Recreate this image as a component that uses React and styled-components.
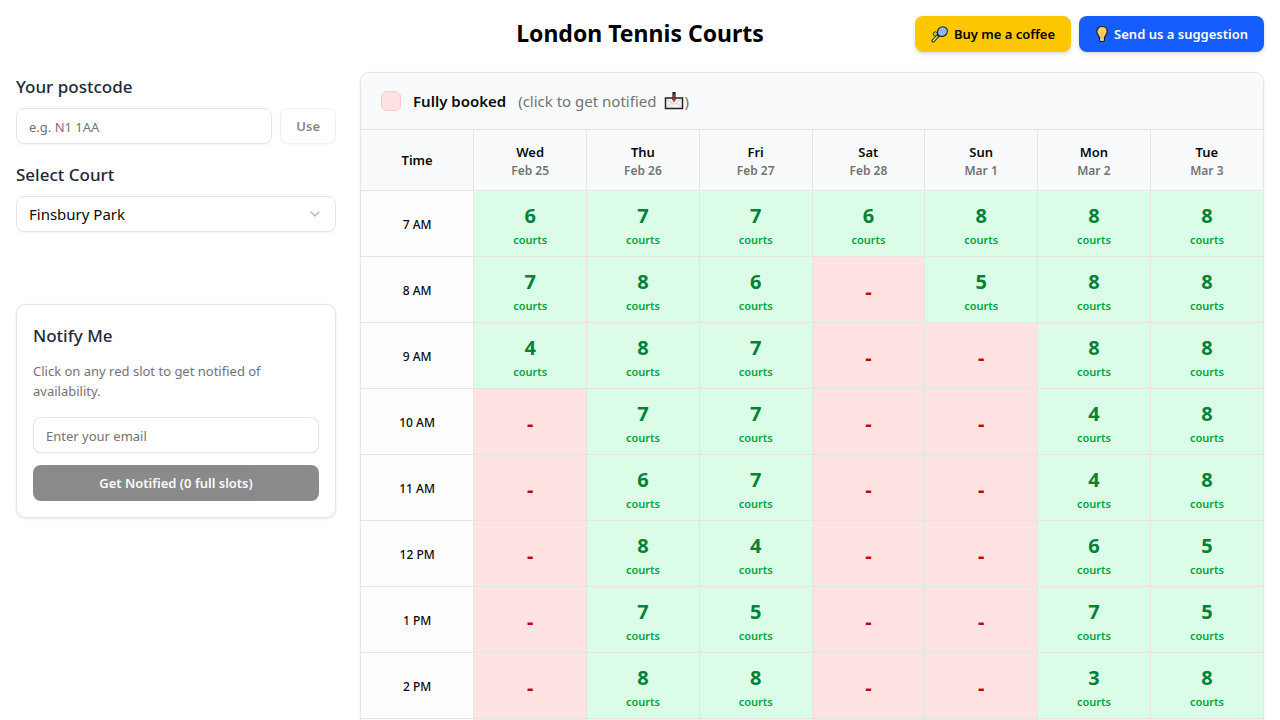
import { useState } from 'react';
import styled, { createGlobalStyle, css } from 'styled-components';
import { ChevronDown } from 'lucide-react';

const days = [
  { name: 'Wed', date: 'Feb 25' },
  { name: 'Thu', date: 'Feb 26' },
  { name: 'Fri', date: 'Feb 27' },
  { name: 'Sat', date: 'Feb 28' },
  { name: 'Sun', date: 'Mar 1' },
  { name: 'Mon', date: 'Mar 2' },
  { name: 'Tue', date: 'Mar 3' },
];

// 0 means every court is taken
const slots = [
  { time: '7 AM', courts: [6, 7, 7, 6, 8, 8, 8] },
  { time: '8 AM', courts: [7, 8, 6, 0, 5, 8, 8] },
  { time: '9 AM', courts: [4, 8, 7, 0, 0, 8, 8] },
  { time: '10 AM', courts: [0, 7, 7, 0, 0, 4, 8] },
  { time: '11 AM', courts: [0, 6, 7, 0, 0, 4, 8] },
  { time: '12 PM', courts: [0, 8, 4, 0, 0, 6, 5] },
  { time: '1 PM', courts: [0, 7, 5, 0, 0, 7, 5] },
  { time: '2 PM', courts: [0, 8, 8, 0, 0, 3, 8] },
  { time: '3 PM', courts: [0, 8, 8, 0, 0, 3, 8] },
];

const GlobalStyles = createGlobalStyle`
  *, *::before, *::after {
    box-sizing: border-box;
    margin: 0;
    padding: 0;
  }

  body {
    background-color: #fff;
    color: #0a0a0a;
    font-family: 'Noto Sans', 'Open Sans', sans-serif;
    font-size: 14px;
    line-height: 20px;
  }

  button, input, select {
    font: inherit;
    color: inherit;
  }
`;

const Page = styled.div`
  padding: 16px;
`;

const Header = styled.header`
  display: grid;
  grid-template-columns: 1fr auto 1fr;
  align-items: center;
  margin-bottom: 20px;
`;

const Title = styled.h1`
  grid-column: 2;
  padding-bottom: 2px;
  font-size: 23px;
  font-weight: 700;
  line-height: 32px;
  color: #000;
`;

const HeaderActions = styled.div`
  display: flex;
  justify-content: flex-end;
  gap: 8px;
`;

const Button = styled.button`
  display: inline-flex;
  align-items: center;
  justify-content: center;
  gap: 5px;
  height: 36px;
  padding: 0 16px;
  border: none;
  border-radius: 8px;
  font-size: 13px;
  font-weight: 600;
  white-space: nowrap;
  cursor: pointer;

  ${({ $variation }) =>
    $variation === 'coffee' &&
    css`
      background-color: #fdc700;
      color: #000;
      box-shadow: 0 2px 4px rgba(0, 0, 0, 0.15);
    `}

  ${({ $variation }) =>
    $variation === 'suggestion' &&
    css`
      background-color: #155dfc;
      color: #fff;
      box-shadow: 0 2px 4px rgba(0, 0, 0, 0.15);
    `}

  ${({ $variation }) =>
    $variation === 'outline' &&
    css`
      padding: 0 15px;
      background-color: #fff;
      border: 1px solid #e5e5e5;
      box-shadow: 0 1px 2px rgba(0, 0, 0, 0.05);
    `}

  ${({ $variation }) =>
    $variation === 'primary' &&
    css`
      width: 100%;
      background-color: #171717;
      color: #fafafa;
    `}

  &:disabled {
    opacity: 0.5;
    cursor: default;
  }
`;

const Layout = styled.div`
  display: grid;
  grid-template-columns: 320px minmax(0, 1fr);
  gap: 24px;
  align-items: start;
`;

const Sidebar = styled.aside`
  display: flex;
  flex-direction: column;
`;

const Field = styled.div`
  margin-bottom: 16px;
`;

const labelText = css`
  font-size: 17px;
  font-weight: 500;
  line-height: 30px;
  color: #1e2939;
`;

const Label = styled.label`
  ${labelText}
  display: block;
  margin-bottom: 6px;
`;

const InputRow = styled.form`
  display: flex;
  gap: 8px;
`;

const control = css`
  width: 100%;
  min-width: 0;
  height: 36px;
  padding: 0 12px;
  border: 1px solid #e5e5e5;
  border-radius: 8px;
  background-color: #fff;
  box-shadow: 0 1px 2px rgba(0, 0, 0, 0.05);
`;

const Input = styled.input`
  ${control}
  padding-top: 2px;
  font-size: 13px;

  &::placeholder {
    color: #737373;
    opacity: 1;
  }
`;

const SelectBox = styled.div`
  display: grid;
  align-items: center;

  & > * {
    grid-area: 1 / 1;
  }

  svg {
    justify-self: end;
    margin-right: 13px;
    color: #b5b5b5;
    pointer-events: none;
  }
`;

const Select = styled.select`
  ${control}
  appearance: none;
  font-size: 15px;
`;

const NotifyCard = styled.form`
  margin-top: 56px;
  padding: 16px;
  border: 1px solid #e5e5e5;
  border-radius: 10px;
  box-shadow: 0 1px 3px rgba(0, 0, 0, 0.1);
`;

const CardTitle = styled.h2`
  ${labelText}
  margin-bottom: 10px;
`;

const CardText = styled.p`
  margin-bottom: 16px;
  font-size: 13px;
  color: #737373;
`;

const CardFields = styled.div`
  display: grid;
  gap: 12px;
`;

const Schedule = styled.main`
  overflow: hidden;
  border: 1px solid #e5e5e5;
  border-radius: 10px;
  box-shadow: 0 1px 3px rgba(0, 0, 0, 0.1);
`;

const Legend = styled.div`
  display: flex;
  align-items: center;
  gap: 12px;
  height: 57px;
  padding: 0 20px;
  border-bottom: 1px solid #e5e5e5;
  background-color: #f9fafc;
  font-size: 15px;
  line-height: 24px;
`;

const Swatch = styled.span`
  width: 20px;
  height: 20px;
  border: 1px solid #ffc9c9;
  border-radius: 6px;
  background-color: #ffe2e2;
`;

const LegendLabel = styled.strong`
  font-weight: 600;
`;

const LegendHint = styled.span`
  display: flex;
  align-items: center;
  color: #737373;

  svg {
    margin-left: 8px;
  }
`;

const Table = styled.table`
  width: 100%;
  table-layout: fixed;
  border-collapse: collapse;
  text-align: center;
`;

const cell = css`
  border-bottom: 1px solid #e5e5e5;

  &:not(:last-child) {
    border-right: 1px solid #e5e5e5;
  }
`;

const HeadCell = styled.th`
  ${cell}
  height: 60px;
  padding-top: 1px;
  background-color: #f9fafc;
  font-size: 13px;
  font-weight: 600;
  line-height: 22px;
`;

const DayDate = styled.div`
  font-size: 12px;
  line-height: 16px;
  color: #737373;
`;

const TimeCell = styled.th`
  ${cell}
  height: 66px;
  padding-top: 4px;
  background-color: #fdfdfd;
  font-size: 12px;
  font-weight: 500;
`;

const SlotCell = styled.td`
  ${cell}
  padding-top: 6px;
  background-color: ${({ $full }) => ($full ? '#ffe2e2' : '#dbfce7')};
  cursor: ${({ $full }) => ($full ? 'pointer' : 'default')};
`;

const Count = styled.div`
  font-size: 20px;
  font-weight: 700;
  line-height: 28px;
  color: ${({ $full }) => ($full ? '#c10007' : '#008236')};
`;

const Unit = styled.div`
  font-size: 11px;
  font-weight: 600;
  line-height: 20px;
  color: #00a63e;
`;

function RacketIcon() {
  return (
    <svg width="18" height="18" viewBox="0 0 18 18" aria-hidden="true">
      <path d="M2.2 15.8 7 10.6" stroke="#1b1b1b" strokeWidth="3.4" strokeLinecap="round" />
      <path d="M2.3 15.7 6.6 11" stroke="#d9d9d9" strokeWidth="1.6" strokeLinecap="round" />
      <path d="M6.8 11.2 7.4 6.5 11.5 10.6Z" fill="#92b4f2" stroke="#1b1b1b" strokeLinejoin="round" />
      <ellipse cx="11.4" cy="6.6" rx="5.2" ry="4.6" transform="rotate(-42 11.4 6.6)" fill="#92b4f2" stroke="#1b1b1b" strokeWidth="1.1" />
      <circle cx="4.3" cy="8.9" r="2.1" fill="#b1cc33" stroke="#1b1b1b" strokeWidth="0.8" />
    </svg>
  );
}

function BulbIcon() {
  return (
    <svg width="14" height="18" viewBox="0 0 14 18" aria-hidden="true">
      <path
        d="M7 1.5C3.9 1.5 1.8 3.7 1.8 6.5c0 2.6 2.2 3.8 2.8 6.5v2.2c0 .7.5 1.2 1.2 1.2h2.4c.7 0 1.2-.5 1.2-1.2V13c.6-2.7 2.8-3.9 2.8-6.5C12.2 3.7 10.1 1.5 7 1.5Z"
        fill="#fccf63"
        stroke="#1b1b1b"
        strokeWidth="1.2"
      />
      <path d="M5.2 13.6h3.6v2.2H5.2z" fill="#d0cfce" />
      <path d="M5.5 7.5 7 9l1.5-1.5M7 9v4" fill="none" stroke="#e9a93a" strokeWidth="0.7" />
    </svg>
  );
}

function MailIcon() {
  return (
    <svg width="20" height="20" viewBox="0 0 20 20" aria-hidden="true">
      <path d="M1.5 7h17v10.5h-17z" fill="#f2f2f2" stroke="#222" strokeWidth="1.5" />
      <path d="m2.5 16.5 5.5-5M17.5 16.5l-5.5-5M2.5 8l7.5 5.5L17.5 8" fill="none" stroke="#c9c9c9" strokeWidth="0.8" />
      <path d="M8.4 1h3.2v6.500H8.400z" fill="#222" />
      <path d="M9.3 3h1.4v5h1.600L10 11.500 7.700 8h1.600z" fill="#d92332" />
    </svg>
  );
}

function Slot({ count }) {
  const isFull = count === 0;

  return (
    <SlotCell $full={isFull}>
      <Count $full={isFull}>{isFull ? '-' : count}</Count>
      {!isFull && <Unit>courts</Unit>}
    </SlotCell>
  );
}

function App() {
  const [postcode, setPostcode] = useState('');
  const [court, setCourt] = useState('Finsbury Park');
  const [email, setEmail] = useState('');

  return (
    <>
      <GlobalStyles />
      <Page>
        <Header>
          <Title>London Tennis Courts</Title>
          <HeaderActions>
            <Button $variation="coffee">
              <RacketIcon />
              Buy me a coffee
            </Button>
            <Button $variation="suggestion">
              <BulbIcon />
              Send us a suggestion
            </Button>
          </HeaderActions>
        </Header>

        <Layout>
          <Sidebar>
            <Field>
              <Label htmlFor="postcode">Your postcode</Label>
              <InputRow onSubmit={(e) => e.preventDefault()}>
                <Input
                  id="postcode"
                  placeholder="e.g. N1 1AA"
                  value={postcode}
                  onChange={(e) => setPostcode(e.target.value)}
                />
                <Button $variation="outline" disabled={!postcode}>
                  Use
                </Button>
              </InputRow>
            </Field>

            <Field>
              <Label htmlFor="court">Select Court</Label>
              <SelectBox>
                <Select
                  id="court"
                  value={court}
                  onChange={(e) => setCourt(e.target.value)}
                >
                  <option>Finsbury Park</option>
                </Select>
                <ChevronDown size={16} />
              </SelectBox>
            </Field>

            <NotifyCard onSubmit={(e) => e.preventDefault()}>
              <CardTitle>Notify Me</CardTitle>
              <CardText>
                Click on any red slot to get notified of availability.
              </CardText>
              <CardFields>
                <Input
                  type="email"
                  aria-label="Email"
                  placeholder="Enter your email"
                  value={email}
                  onChange={(e) => setEmail(e.target.value)}
                />
                <Button $variation="primary" disabled>
                  Get Notified (0 full slots)
                </Button>
              </CardFields>
            </NotifyCard>
          </Sidebar>

          <Schedule>
            <Legend>
              <Swatch />
              <LegendLabel>Fully booked</LegendLabel>
              <LegendHint>
                (click to get notified <MailIcon />)
              </LegendHint>
            </Legend>
            <Table>
              <thead>
                <tr>
                  <HeadCell scope="col">Time</HeadCell>
                  {days.map((day) => (
                    <HeadCell key={day.date} scope="col">
                      {day.name}
                      <DayDate>{day.date}</DayDate>
                    </HeadCell>
                  ))}
                </tr>
              </thead>
              <tbody>
                {slots.map((slot) => (
                  <tr key={slot.time}>
                    <TimeCell scope="row">{slot.time}</TimeCell>
                    {slot.courts.map((count, i) => (
                      <Slot key={days[i].date} count={count} />
                    ))}
                  </tr>
                ))}
              </tbody>
            </Table>
          </Schedule>
        </Layout>
      </Page>
    </>
  );
}

export default App;
